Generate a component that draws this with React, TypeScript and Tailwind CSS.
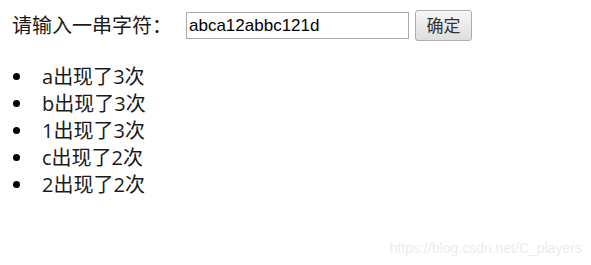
import React from 'react';

const COUNTS = [
  { ch: 'a', n: 3 },
  { ch: 'b', n: 3 },
  { ch: '1', n: 3 },
  { ch: 'c', n: 2 },
  { ch: '2', n: 2 },
];

const FONT = "font-['Segoe_UI','Open_Sans','Noto_Sans_CJK_SC',sans-serif]";

export default function App() {
  return (
    <div className={`relative w-[591px] h-[265px] bg-white text-[#1a1a1a] ${FONT}`}>
      <div className="flex items-center pl-[12px] pt-[10px] h-[31px] box-content">
        <span className="text-[20px] leading-[27px] w-[174px]">请输入一串字符：</span>
        <input
          className="w-[223px] h-[27px] border border-[#a9a9a9] px-[2px] text-[17px] font-['Liberation_Sans',Arial,sans-serif] text-black outline-none"
          defaultValue="abca12abbc121d"
        />
        <button className="ml-[6px] w-[57px] h-[31px] border border-[#adadad] rounded-[3px] bg-gradient-to-b from-[#f6f6f6] to-[#dedede] text-[17px] text-[#333] leading-none">
          确定
        </button>
      </div>
      <ul className="mt-[22px] pl-[13px] text-[20px] leading-[27px]">
        {COUNTS.map((c) => (
          <li key={c.ch} className="flex items-center">
            <span className="w-[7px] h-[7px] rounded-full bg-black mr-[22px]" />
            {c.ch}出现了{c.n}次
          </li>
        ))}
      </ul>
      <div className="absolute right-[9px] bottom-[6px] text-[14px] text-[#ececec] font-['Liberation_Sans',Arial,sans-serif]">
        https://blog.csdn.net/C_players
      </div>
    </div>
  );
}
